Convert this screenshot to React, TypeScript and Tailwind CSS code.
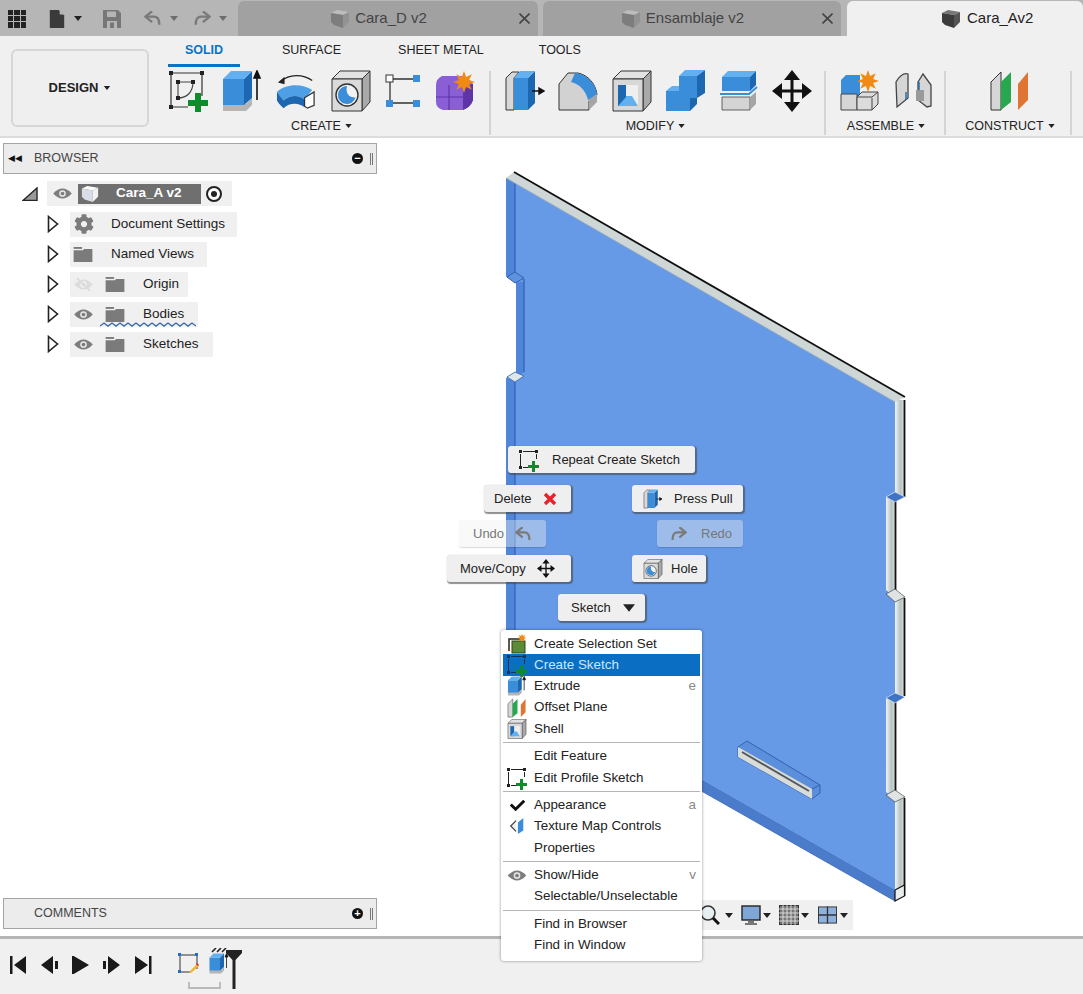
import { FaCheck, FaCog } from "react-icons/fa";

type IconProps = { className?: string };

const BLUE = "#3a8dd9";
const DARK_BLUE = "#1c67b0";
const LIGHT_BLUE = "#62b0f0";

function Caret({ className = "" }: IconProps) {
  return (
    <svg viewBox="0 0 8 5" className={className}>
      <path d="M0 0H8L4 5Z" fill="currentColor" />
    </svg>
  );
}

function SketchIcon({ className = "" }: IconProps) {
  return (
    <svg viewBox="0 0 40 42" className={className}>
      <path d="M3 3H34V26M3 3V37H20" fill="none" stroke="#333" strokeWidth="1.2" />
      <path d="M10 12H25C25 22 19 28 10 28Z" fill="none" stroke="#444" strokeWidth="1.1" />
      {[[1, 1], [32, 1], [1, 35], [8, 10], [23, 10], [8, 26]].map(([x, y]) => (
        <rect key={`${x}-${y}`} x={x} y={y} width="4" height="4" fill="#222" />
      ))}
      <path d="M27 23h6v7h7v6h-7v6h-6v-6h-7v-6h7z" fill="#0f8a2c" />
    </svg>
  );
}

// the marking menu and context menu show the same tool without the inner profile
function SketchIconSmall({ className = "", color = "#222" }: IconProps & { color?: string }) {
  return (
    <svg viewBox="0 0 20 20" className={className}>
      <path d="M4 1.5H16M1.5 4V16M17.5 4V9M4 17.5H9" fill="none" stroke={color} strokeWidth="1" />
      {[[0, 0], [16, 0], [0, 16]].map(([x, y]) => (
        <rect key={`${x}-${y}`} x={x} y={y} width="3" height="3" fill={color} />
      ))}
      <path d="M13 11h3v4h4v3h-4v4h-3v-4H9v-3h4z" fill="#0f8a2c" />
    </svg>
  );
}

function ExtrudeIcon({ className = "" }: IconProps) {
  return (
    <svg viewBox="0 0 40 42" className={className}>
      <path d="M1 34H24L30 28V35L24 41H1Z" fill="#b5b5b5" />
      <path d="M1 9H22V35H1Z" fill={BLUE} />
      <path d="M22 9L30 1V28L22 35Z" fill={DARK_BLUE} />
      <path d="M1 9L9 1H30L22 9Z" fill={LIGHT_BLUE} />
      <path d="M35 30V5M32 8L35 1L38 8Z" stroke="#111" strokeWidth="1.6" fill="#111" />
    </svg>
  );
}

function RevolveIcon({ className = "" }: IconProps) {
  return (
    <svg viewBox="0 0 42 42" className={className}>
      <path d="M5 11C14 3 28 3 38 10" fill="none" stroke="#222" strokeWidth="1.5" />
      <path d="M2 12L9 6L9 14Z" fill="#222" />
      <path d="M1 22C10 13 28 13 38 20L30 30C24 25 15 25 8 31Z" fill="#4f9fe6" />
      <path d="M1 22V31C3 35 6 37 8 39C14 33 24 33 30 38V30C24 25 15 25 8 31Z" fill={DARK_BLUE} />
      <path d="M30 28L40 22V36L33 39L30 37Z" fill="#fff" stroke="#333" strokeWidth="1.3" />
    </svg>
  );
}

function HoleIcon({ className = "" }: IconProps) {
  return (
    <svg viewBox="0 0 40 42" className={className}>
      <path d="M1 9L9 1H39L31 9Z" fill="#e2e2e2" stroke="#333" />
      <path d="M31 9L39 1V32L31 41Z" fill="#a9a9a9" stroke="#333" />
      <path d="M1 9H31V41H1Z" fill="#dadada" stroke="#333" />
      <circle cx="16" cy="25" r="11" fill="#f2f2f2" stroke="#333" strokeWidth="1.4" />
      <path d="M16 16a9 9 0 1 0 8.6 11.5C19 28 14 24 16 16Z" fill={BLUE} />
    </svg>
  );
}

function PatternIcon({ className = "" }: IconProps) {
  return (
    <svg viewBox="0 0 36 38" className={className}>
      <path d="M8 7H28M5 10V28M8 31H28" stroke="#333" strokeWidth="1.3" />
      <rect x="1" y="3" width="7" height="7" fill="#fff" stroke="#333" />
      <rect x="28" y="3" width="7" height="7" fill={BLUE} />
      <rect x="1" y="28" width="7" height="7" fill={BLUE} />
      <rect x="28" y="28" width="7" height="7" fill={BLUE} />
    </svg>
  );
}

function Star({ cx, cy, r }: { cx: number; cy: number; r: number }) {
  const points = Array.from({ length: 16 }, (_, i) => {
    const a = (i * Math.PI) / 8;
    const d = i % 2 === 0 ? r : r * 0.5;
    return `${cx + d * Math.sin(a)},${cy - d * Math.cos(a)}`;
  }).join(" ");
  return <polygon points={points} fill="#f08a14" />;
}

function FormIcon({ className = "" }: IconProps) {
  return (
    <svg viewBox="0 0 40 42" className={className}>
      <path d="M1 15Q1 9 7 6H26Q34 8 38 14V30Q36 37 28 40H8Q1 38 1 32Z" fill="#8a5fd6" />
      <path d="M28 17L38 14V30Q36 37 28 40Z" fill="#5d35a8" />
      <path d="M1 27H28M14 15V40" stroke="#5d35a8" strokeWidth="1.2" />
      <Star cx={29} cy={12} r={11} />
    </svg>
  );
}

function PressPullIcon({ className = "" }: IconProps) {
  return (
    <svg viewBox="0 0 40 42" className={className}>
      <path d="M1 8L7 2H14L9 8V40H1Z" fill="#d8d8d8" stroke="#333" />
      <path d="M9 8H23V40H9Z" fill={BLUE} />
      <path d="M23 8L30 1V33L23 40Z" fill={DARK_BLUE} />
      <path d="M9 8L15 1H30L23 8Z" fill={LIGHT_BLUE} />
      <path d="M27 21H36M34 18L39 21L34 24Z" stroke="#111" strokeWidth="1.4" fill="#111" />
    </svg>
  );
}

function FilletIcon({ className = "" }: IconProps) {
  return (
    <svg viewBox="0 0 40 42" className={className}>
      <path d="M1 14L10 3H20C30 5 38 14 39 25L31 31V40H1Z" fill="#d2d2d2" stroke="#333" />
      <path d="M31 29L39 24V32L31 40Z" fill="#a5a5a5" />
      <path d="M17 3C29 4 38 14 39 24L30 30C28 21 22 14 13 12Z" fill={BLUE} />
    </svg>
  );
}

function ShellIcon({ className = "" }: IconProps) {
  return (
    <svg viewBox="0 0 40 42" className={className}>
      <path d="M1 9L9 1H39L31 9Z" fill="#e2e2e2" stroke="#333" />
      <path d="M31 9L39 1V32L31 41Z" fill="#a9a9a9" stroke="#333" />
      <path d="M1 9H31V41H1Z" fill="#d8d8d8" stroke="#333" />
      <path d="M6 15H26V36H6Z" fill="#efefef" />
      <path d="M6 15H14V36H6Z" fill={DARK_BLUE} />
      <path d="M14 27L20 27V36H6Z M14 26H20L26 36H14Z" fill={LIGHT_BLUE} />
    </svg>
  );
}

function CombineIcon({ className = "" }: IconProps) {
  return (
    <svg viewBox="0 0 40 42" className={className}>
      <path d="M1 21H14V6H32V28H25V41H1Z" fill={BLUE} />
      <path d="M14 6L20 0H40L32 6Z" fill={LIGHT_BLUE} />
      <path d="M1 21L7 16H14V21Z" fill={LIGHT_BLUE} />
      <path d="M32 6L40 0V23L32 28Z" fill={DARK_BLUE} />
      <path d="M25 28H32V34L25 41Z" fill={DARK_BLUE} />
    </svg>
  );
}

function SplitIcon({ className = "" }: IconProps) {
  return (
    <svg viewBox="0 0 40 42" className={className}>
      <path d="M3 7L9 1H37L31 7Z" fill={LIGHT_BLUE} />
      <path d="M3 7H31V21H3Z" fill={BLUE} />
      <path d="M31 7L37 1V15L31 21Z" fill={DARK_BLUE} />
      <path d="M1 24H30L38 17" fill="none" stroke={BLUE} strokeWidth="2" />
      <path d="M3 27H31V40H3Z" fill="#d4d4d4" stroke="#444" strokeWidth="0.8" />
      <path d="M31 27L37 22V34L31 40Z" fill="#a5a5a5" />
    </svg>
  );
}

function MoveIcon({ className = "" }: IconProps) {
  return (
    <svg viewBox="0 0 40 42" className={className}>
      <path d="M20 5V37M4 21H36" stroke="#111" strokeWidth="3" />
      <path d="M20 0L28 10H12ZM20 42L12 32H28ZM0 21L10 13V29ZM40 21L30 29V13Z" fill="#111" />
    </svg>
  );
}

function NewComponentIcon({ className = "" }: IconProps) {
  return (
    <svg viewBox="0 0 40 42" className={className}>
      <path d="M1 10L6 5H20V28H1Z" fill={BLUE} />
      <path d="M1 24H17V40H1Z" fill="#d6d6d6" stroke="#444" />
      <path d="M17 27L22 22H38V34L32 40H17Z" fill="#dcdcdc" stroke="#444" />
      <path d="M32 28V40M17 27H32L38 22" fill="none" stroke="#444" />
      <Star cx={28} cy={11} r={11} />
    </svg>
  );
}

function JointIcon({ className = "" }: IconProps) {
  return (
    <svg viewBox="0 0 38 42" className={className}>
      <path d="M2 12Q8 2 14 4V28L3 37Z" fill="#d6d6d6" stroke="#444" strokeWidth="1.3" />
      <path d="M24 12L29 4L37 15V36L33 37L24 30Z" fill="#d6d6d6" stroke="#444" strokeWidth="1.3" />
      <path d="M22 20H30V31H22Z" fill="#9a9a9a" />
      <path d="M12 22V30M25 12V20" stroke={DARK_BLUE} strokeWidth="1.4" />
    </svg>
  );
}

function PlaneIcon({ className = "" }: IconProps) {
  return (
    <svg viewBox="0 0 40 42" className={className}>
      <path d="M1 12L11 2V40H1Z" fill="#d6d6d6" stroke="#333" />
      <path d="M11 12L21 2V32L11 40Z" fill="#27a84f" />
      <path d="M28 14L38 2V30L28 40Z" fill="#e07533" />
    </svg>
  );
}

function CubeIcon({ className = "", face = "#9c9c9c", side = "#8a8a8a", top = "#b5b5b5" }: IconProps & { face?: string; side?: string; top?: string }) {
  return (
    <svg viewBox="0 0 20 20" className={className}>
      <path d="M1 4L7 1L19 3L13 6Z" fill={top} />
      <path d="M1 4L13 6V19L4 16L1 13Z" fill={face} />
      <path d="M13 6L19 3V13L13 19Z" fill={side} />
    </svg>
  );
}

function EyeIcon({ className = "", off = false }: IconProps & { off?: boolean }) {
  return (
    <svg viewBox="0 0 20 14" className={className}>
      <path d="M0 7Q10 -4 20 7Q10 18 0 7Z" fill={off ? "#dcdcdc" : "#7d7d7d"} />
      <circle cx="10" cy="7" r="3.6" fill={off ? "#f0f0f0" : "#e8e8e8"} />
      <circle cx="10" cy="7" r="2" fill={off ? "#dcdcdc" : "#7d7d7d"} />
      {off && <path d="M3 0L17 14" stroke="#dcdcdc" strokeWidth="2" />}
    </svg>
  );
}

function FolderIcon({ className = "" }: IconProps) {
  return (
    <svg viewBox="0 0 20 16" className={className}>
      <path d="M0 0H9V2H0Z" fill="#7b7b7b" />
      <path d="M0 3.5H10L11 2H20V16H0Z" fill="#7b7b7b" />
    </svg>
  );
}

function ExpandArrow() {
  return (
    <svg viewBox="0 0 12 18" className="h-[18px] w-3 shrink-0">
      <path d="M1.5 1.5L10.5 9L1.5 16.5Z" fill="#fff" stroke="#222" strokeWidth="1.6" />
    </svg>
  );
}

function FileIcon({ className = "" }: IconProps) {
  return (
    <svg viewBox="0 0 16 20" className={className}>
      <path d="M0 0H10L16 6V20H0Z" fill="#3a3a3a" />
      <path d="M11 0L16 5H11Z" fill="#b5b5b5" />
    </svg>
  );
}

function SaveIcon({ className = "" }: IconProps) {
  return (
    <svg viewBox="0 0 18 18" className={className}>
      <path d="M0 0H15L18 3V18H0Z" fill="#777" />
      <path d="M4 1.5H13V7H4Z" fill="#b5b5b5" />
      <path d="M4 11H14V18H4Z" fill="#b5b5b5" />
      <path d="M7 12.5H11V18H7Z" fill="#777" />
    </svg>
  );
}

function UndoIcon({ className = "", color = "#7a7a7a" }: IconProps & { color?: string }) {
  return (
    <svg viewBox="0 0 20 16" className={className}>
      <path d="M3 6H11Q17 6 17 15" fill="none" stroke={color} strokeWidth="2.6" />
      <path d="M9 0L1.5 6L9 12" fill="none" stroke={color} strokeWidth="2.6" />
    </svg>
  );
}

function TabCube({ dark = false }: { dark?: boolean }) {
  return dark ? (
    <CubeIcon className="h-5 w-5" face="#3c3c3c" side="#555" top="#777" />
  ) : (
    <CubeIcon className="h-5 w-5" face="#7d7d7d" side="#929292" top="#bdbdbd" />
  );
}

function DocTab({ name, className }: { name: string; className: string }) {
  return (
    <div className={`flex items-center rounded-t-md bg-[#a1a1a1] text-[#444] ${className}`}>
      <div className="flex flex-1 items-center justify-center gap-[5px]">
        <TabCube />
        <span className="text-[15px]">{name}</span>
      </div>
      <svg viewBox="0 0 11 11" className="mr-[8px] h-[11px] w-[11px]">
        <path d="M0.5 0.5L10.5 10.5M10.5 0.5L0.5 10.5" stroke="#444" strokeWidth="1.6" />
      </svg>
    </div>
  );
}

function TopBar() {
  return (
    <div className="flex h-9 shrink-0 items-stretch bg-[#b6b6b6] pt-[1px]">
      <div className="flex w-[238px] shrink-0 items-center text-[#6d6d6d]">
        <div className="ml-[8px] grid h-[18px] w-[18px] grid-cols-3 gap-[1px]">
          {Array.from({ length: 9 }, (_, i) => (
            <span key={i} className="bg-[#222]" />
          ))}
        </div>
        <FileIcon className="ml-[23px] h-[18px] w-[16px]" />
        <Caret className="ml-[9px] h-[5px] w-[8px] text-[#222]" />
        <SaveIcon className="ml-[21px] h-[18px] w-[18px]" />
        <UndoIcon className="ml-[23px] h-[15px] w-[18px]" />
        <Caret className="ml-[8px] h-[5px] w-[8px]" />
        <UndoIcon className="ml-[15px] h-[15px] w-[18px] -scale-x-100" />
        <Caret className="ml-[8px] h-[5px] w-[8px]" />
      </div>
      <DocTab name="Cara_D v2" className="w-[300px]" />
      <DocTab name="Ensamblaje v2" className="ml-[5px] w-[298px]" />
      <div className="ml-[6px] flex flex-1 items-center gap-[6px] rounded-t-md bg-[#f0f0f0] pl-[94px] text-[#222]">
        <TabCube dark />
        <span className="text-[15px]">Cara_Av2</span>
      </div>
    </div>
  );
}

function ToolGroup({ label, width, labelClass = "", icons }: { label: string; width: string; labelClass?: string; icons: React.ReactNode }) {
  return (
    <div className={`flex flex-col items-center ${width}`}>
      <div className="flex h-[43px] w-full items-center justify-between">{icons}</div>
      <div className={`mt-[6px] flex items-center gap-[4px] text-[12.5px] leading-4 text-[#222] ${labelClass}`}>
        {label}
        <Caret className="h-[4px] w-[7px]" />
      </div>
    </div>
  );
}

function Divider({ className }: { className: string }) {
  return <div className={`mt-[2px] h-[64px] w-[2px] shrink-0 bg-[#d4d4d4] ${className}`} />;
}

function Toolbar() {
  return (
    <div className="flex h-[102px] shrink-0 border-b-2 border-[#dcdcdc] bg-[#f0f0f0] pl-[11px] pt-[13px]">
      <div className="flex h-[78px] w-[138px] shrink-0 items-center justify-center gap-[5px] rounded-md border-2 border-[#d6d6d6] bg-[#efefef] text-[13px] font-bold text-[#222]">
        DESIGN
        <Caret className="h-[4px] w-[8px]" />
      </div>
      <div className="-mt-[8px] ml-[19px] flex flex-col">
        <div className="flex h-[28px] items-start text-[12.5px] leading-4 text-[#222]">
          <span className="h-[26px] w-[72px] border-b-[3px] border-[#0a74c4] pt-[1px] text-center font-bold text-[#0a74c4]">SOLID</span>
          <span className="ml-[42px] pt-[1px]">SURFACE</span>
          <span className="ml-[57px] pt-[1px]">SHEET METAL</span>
          <span className="ml-[55px] pt-[1px]">TOOLS</span>
        </div>
        <div className="flex">
          <ToolGroup
            label="CREATE"
            width="w-[307px]"
            icons={
              <>
                <SketchIcon className="h-[42px] w-10" />
                <ExtrudeIcon className="h-[42px] w-10" />
                <RevolveIcon className="h-[42px] w-10" />
                <HoleIcon className="h-[42px] w-10" />
                <PatternIcon className="h-[38px] w-9" />
                <FormIcon className="h-[42px] w-10" />
              </>
            }
          />
          <Divider className="mx-[14px]" />
          <ToolGroup
            label="MODIFY"
            width="w-[307px]"
            labelClass="mr-[6px]"
            icons={
              <>
                <PressPullIcon className="h-[42px] w-10" />
                <FilletIcon className="h-[42px] w-10" />
                <ShellIcon className="h-[42px] w-10" />
                <CombineIcon className="h-[42px] w-10" />
                <SplitIcon className="h-[42px] w-10" />
                <MoveIcon className="h-[42px] w-10" />
              </>
            }
          />
          <Divider className="ml-[12px] mr-[14px]" />
          <ToolGroup
            label="ASSEMBLE"
            width="w-[92px]"
            icons={
              <>
                <NewComponentIcon className="h-[42px] w-10" />
                <JointIcon className="h-[42px] w-[38px]" />
              </>
            }
          />
          <Divider className="ml-[12px] mr-[14px]" />
          <ToolGroup
            label="CONSTRUCT"
            width="w-[100px]"
            icons={<PlaneIcon className="mx-auto h-[42px] w-10" />}
          />
          <Divider className="ml-[10px]" />
        </div>
      </div>
    </div>
  );
}

function PanelHeader({ title, sign, titleClass }: { title: string; sign: string; titleClass?: string }) {
  return (
    <div className="flex h-[31px] w-[374px] items-center border border-[#a5a5a5] bg-[#ececec] text-[12.5px] text-[#444]">
      <span className={titleClass}>{title}</span>
      <span className="ml-auto flex h-[11px] w-[11px] items-center justify-center rounded-full bg-[#111] text-[11px] font-bold leading-none text-white">{sign}</span>
      <span className="ml-[7px] mr-[3px] h-[12px] w-[3px] border-x border-[#777]" />
    </div>
  );
}

function TreeRow({ width, children }: { width: string; children: React.ReactNode }) {
  return (
    <div className="flex h-[30px] items-center pl-[44px]">
      <ExpandArrow />
      <div className={`ml-[11px] flex h-[25px] items-center bg-[#f0f0f0] text-[13.5px] text-[#222] ${width}`}>{children}</div>
    </div>
  );
}

function Browser() {
  return (
    <div className="flex flex-col">
      <PanelHeader
        title="BROWSER"
        sign="−"
        titleClass="relative pl-[30px] before:absolute before:left-[4px] before:top-[3px] before:text-[9px] before:text-[#111] before:content-['◀◀']"
      />
      <div className="mt-[7px] flex h-[25px] items-center pl-[19px]">
        <svg viewBox="0 0 16 14" className="h-[14px] w-4 shrink-0">
          <path d="M1 13.5L15 1V13.5Z" fill="#fff" stroke="#222" strokeWidth="1.4" />
          <path d="M1 13.5L15 1V13.5Z" fill="#333" opacity="0.5" />
        </svg>
        <div className="ml-[9px] flex h-[25px] w-[185px] items-center bg-[#f0f0f0]">
          <EyeIcon className="ml-[6px] h-[13px] w-[19px]" />
          <div className="ml-[6px] flex h-[20px] w-[123px] items-center bg-[#6f6f6f] pl-[3px] text-[13.5px] font-bold text-white">
            <CubeIcon className="h-[18px] w-[18px]" face="#d8dde8" side="#f2f2f2" top="#fafafa" />
            <span className="ml-[17px]">Cara_A v2</span>
          </div>
          <span className="ml-[5px] flex h-[16px] w-[16px] items-center justify-center rounded-full border-2 border-[#222] bg-white">
            <span className="h-[6px] w-[6px] rounded-full bg-[#222]" />
          </span>
        </div>
      </div>
      <div className="mt-[3px] flex flex-col">
        <TreeRow width="w-[167px]">
          <FaCog className="ml-[4px] h-[20px] w-[20px] text-[#7b7b7b]" />
          <span className="ml-[17px]">Document Settings</span>
        </TreeRow>
        <TreeRow width="w-[137px]">
          <FolderIcon className="ml-[3px] h-[15px] w-[20px]" />
          <span className="ml-[18px]">Named Views</span>
        </TreeRow>
        <TreeRow width="w-[118px]">
          <EyeIcon className="ml-[4px] h-[13px] w-[19px]" off />
          <FolderIcon className="ml-[12px] h-[15px] w-[20px]" />
          <span className="ml-[18px]">Origin</span>
        </TreeRow>
        <TreeRow width="relative w-[128px]">
          <EyeIcon className="ml-[4px] h-[13px] w-[19px]" />
          <FolderIcon className="ml-[12px] h-[15px] w-[20px]" />
          <span className="ml-[18px]">Bodies</span>
          <svg viewBox="0 0 96 5" className="absolute bottom-0 left-[30px] h-[5px] w-[96px]">
            <path d="M0 4L4 1L8 4L12 1L16 4L20 1L24 4L28 1L32 4L36 1L40 4L44 1L48 4L52 1L56 4L60 1L64 4L68 1L72 4L76 1L80 4L84 1L88 4L92 1L96 4" fill="none" stroke="#3c6ca8" strokeWidth="1.4" />
          </svg>
        </TreeRow>
        <TreeRow width="w-[143px]">
          <EyeIcon className="ml-[4px] h-[13px] w-[19px]" />
          <FolderIcon className="ml-[12px] h-[15px] w-[20px]" />
          <span className="ml-[18px]">Sketches</span>
        </TreeRow>
      </div>
    </div>
  );
}

function Model() {
  return (
    <svg viewBox="0 138 1083 798" className="absolute inset-0 h-full w-full">
      <defs>
        <linearGradient id="edge" x1="0" x2="1" y1="0" y2="0">
          <stop offset="0" stopColor="#f2f4f4" />
          <stop offset="0.6" stopColor="#b9c2c2" />
          <stop offset="1" stopColor="#d8dcdc" />
        </linearGradient>
      </defs>
      {/* bottom thickness */}
      <path d="M506 668L895 890V901L506 680Z" fill="#4a7ccb" stroke="#3a68b3" strokeWidth="0.8" />
      {/* right edge strips */}
      {[[895, 400, 97], [886, 498, 97], [895, 598, 98], [886, 698, 98], [895, 798, 98]].map(([x, y, h]) => (
        <g key={y}>
          <rect x={x} y={y} width="9" height={h} fill="url(#edge)" />
          <path d={`M${x + 9.5} ${y}V${y + h}`} stroke="#111" strokeWidth="1.8" />
        </g>
      ))}
      <path d="M895 890L904.5 885V896L895 901Z" fill="#e8ecec" stroke="#111" strokeWidth="1.2" />
      {/* front face */}
      <path
        d="M506 178L895 402V492L886 497V590L895 597V694L886 699V792L895 799V890L506 668V378L516 372V282L506 276Z"
        fill="#6699e6"
      />
      {/* left strips */}
      <path d="M506 178L515 183V273L506 277Z" fill="#4f86da" />
      <path d="M516 282H524V372L516 378Z" fill="#4f86da" />
      <path d="M506 378L515 382V668L506 668Z" fill="#4f86da" />
      <path d="M515 183V272M524 279V372M515 382V680" stroke="#2f62b0" strokeWidth="1.2" fill="none" />
      <path d="M507 277L515 272L524 278L515 283Z" fill="#5f93e0" stroke="#2f62b0" />
      <path d="M507 377L515 372L524 376L515 382Z" fill="#dfe6e6" stroke="#2f62b0" strokeWidth="0.8" />
      {/* top thickness */}
      <path d="M506 178L514 172L905 397L895 402Z" fill="#cfd6d6" />
      <path d="M514 172L905 397" stroke="#111" strokeWidth="1.8" />
      <path d="M506 178L895 402" stroke="#8aa0b8" strokeWidth="0.8" />
      {/* right notch ledges */}
      <path d="M886 497L895 492L905 497L895 502Z" fill="#3f73c4" stroke="#eee" strokeWidth="0.6" />
      <path d="M886 594L895 589L905 597L895 602Z" fill="#dfe3e3" stroke="#333" strokeWidth="0.6" />
      <path d="M886 698L895 693L905 697L895 703Z" fill="#3f73c4" stroke="#eee" strokeWidth="0.6" />
      <path d="M886 795L895 790L905 797L895 802Z" fill="#dfe3e3" stroke="#333" strokeWidth="0.6" />
      {/* slot */}
      <path d="M738 747L747 741L820 785V793L812 799L738 757Z" fill="#5b8fdc" stroke="#2f62b0" strokeWidth="1" />
      <path d="M738 747L812 789V799L738 757Z" fill="#d9dcd8" />
      <path d="M742 752L809 791" stroke="#55585a" strokeWidth="2" />
      <path d="M812 789L820 785" stroke="#2f62b0" strokeWidth="1" />
    </svg>
  );
}

function NavBar() {
  return (
    <div className="absolute left-[690px] top-[762px] flex h-[30px] w-[163px] items-center bg-[#f0f0f0] pl-[10px] text-[#222]">
      <svg viewBox="0 0 20 20" className="h-[20px] w-[20px]">
        <circle cx="8" cy="8" r="7" fill="#e6f0f0" stroke="#333" strokeWidth="1.6" />
        <path d="M13 13L19 19" stroke="#111" strokeWidth="3" />
      </svg>
      <Caret className="ml-[5px] h-[5px] w-[8px]" />
      <svg viewBox="0 0 20 20" className="ml-[8px] h-[20px] w-[20px]">
        <rect x="1" y="1" width="18" height="14" fill="#7ea7d8" stroke="#222" strokeWidth="1.4" />
        <path d="M7 16H13V18H16V20H4V18H7Z" fill="#777" />
      </svg>
      <Caret className="ml-[2px] h-[5px] w-[8px]" />
      <svg viewBox="0 0 20 20" className="ml-[8px] h-[20px] w-[20px]">
        <rect x="0.5" y="0.5" width="19" height="19" fill="#777" stroke="#333" />
        <path d="M4 0V20M8 0V20M12 0V20M16 0V20M0 4H20M0 8H20M0 12H20M0 16H20" stroke="#eee" strokeWidth="0.8" />
      </svg>
      <Caret className="ml-[2px] h-[5px] w-[8px]" />
      <svg viewBox="0 0 20 18" className="ml-[9px] h-[18px] w-[19px]">
        <rect x="0.5" y="0.5" width="19" height="17" fill="#8fb2dc" stroke="#333" />
        <path d="M10 0V18M0 9H20" stroke="#333" strokeWidth="1.4" />
      </svg>
      <Caret className="ml-[3px] h-[5px] w-[8px]" />
    </div>
  );
}

function MarkButton({ className, children, disabled = false }: { className: string; children: React.ReactNode; disabled?: boolean }) {
  return (
    <div
      className={`absolute flex h-[27px] items-center rounded-[3px] text-[13px] ${
        disabled
          ? "bg-[#f0f0f0]/40 text-[#777] shadow-[0_1px_1px_rgba(0,0,0,0.15)]"
          : "bg-[#efefef] text-[#222] shadow-[1px_1px_1px_1px_rgba(70,70,70,0.6)]"
      } ${className}`}
    >
      {children}
    </div>
  );
}

function MarkingMenu() {
  return (
    <>
      <MarkButton className="left-[508px] top-[308px] w-[187px] pl-[11px]">
        <SketchIconSmall className="h-[20px] w-[20px] overflow-visible" />
        <span className="ml-[13px]">Repeat Create Sketch</span>
      </MarkButton>
      <MarkButton className="left-[484px] top-[347px] w-[87px] pl-[10px]">
        Delete
        <svg viewBox="0 0 14 14" className="ml-[11px] h-[14px] w-[14px]">
          <path d="M2 2L12 12M12 2L2 12" stroke="#e8212b" strokeWidth="3.4" />
        </svg>
      </MarkButton>
      <MarkButton className="left-[632px] top-[347px] w-[111px] pl-[11px]">
        <PressPullIcon className="h-[20px] w-[20px]" />
        <span className="ml-[11px]">Press Pull</span>
      </MarkButton>
      <MarkButton disabled className="left-[459px] top-[382px] w-[87px] pl-[14px]">
        Undo
        <UndoIcon className="ml-[11px] h-[14px] w-[17px]" />
      </MarkButton>
      <MarkButton disabled className="left-[657px] top-[382px] w-[86px] pl-[13px]">
        <UndoIcon className="h-[14px] w-[17px] -scale-x-100" />
        <span className="ml-[14px]">Redo</span>
      </MarkButton>
      <MarkButton className="left-[447px] top-[417px] w-[124px] pl-[13px]">
        Move/Copy
        <MoveIcon className="ml-[11px] h-[19px] w-[18px]" />
      </MarkButton>
      <MarkButton className="left-[632px] top-[417px] w-[74px] pl-[11px]">
        <HoleIcon className="h-[20px] w-[20px]" />
        <span className="ml-[8px]">Hole</span>
      </MarkButton>
      <MarkButton className="left-[558px] top-[456px] w-[87px] pl-[13px]">
        Sketch
        <Caret className="ml-[12px] h-[8px] w-[12px]" />
      </MarkButton>
    </>
  );
}

function MenuItem({ label, hint, icon, active = false }: { label: string; hint?: string; icon?: React.ReactNode; active?: boolean }) {
  return (
    <div className={`flex h-[21.3px] items-center text-[13.4px] ${active ? "bg-[#0a6fc2] text-[#cfe6f8]" : "text-[#222]"}`}>
      <span className="mr-[3px] flex w-[28px] shrink-0 items-center justify-center">{icon}</span>
      <span>{label}</span>
      {hint && <span className="ml-auto pr-[4px] text-[#888]">{hint}</span>}
    </div>
  );
}

function MenuSeparator() {
  return <div className="my-[2.6px] h-[1px] bg-[#b5b5b5]" />;
}

function SelectionSetIcon() {
  return (
    <svg viewBox="0 0 20 20" className="h-[20px] w-[20px]">
      <path d="M2 17V5H14" fill="none" stroke="#222" strokeWidth="1.5" />
      <rect x="5" y="7" width="13" height="12" fill="#5d8a36" stroke="#2b4a15" />
      <Star cx={15} cy={4} r={4.5} />
    </svg>
  );
}

function TextureIcon() {
  return (
    <svg viewBox="0 0 20 20" className="h-[18px] w-[18px]">
      <path d="M9 4L3 10L9 16" fill="#f2f2f2" stroke="#444" strokeWidth="1.4" />
      <path d="M11 6L17 1V15L11 19Z" fill={BLUE} />
    </svg>
  );
}

function ContextMenu() {
  return (
    <div className="absolute left-[501px] top-[492px] flex h-[331px] w-[201px] flex-col rounded-[3px] bg-white px-[2px] pt-[3px] shadow-[0_0_3px_rgba(0,0,0,0.45)]">
      <MenuItem label="Create Selection Set" icon={<SelectionSetIcon />} />
      <MenuItem label="Create Sketch" active icon={<SketchIconSmall className="h-[20px] w-[20px] overflow-visible" color="#12345a" />} />
      <MenuItem label="Extrude" hint="e" icon={<ExtrudeIcon className="h-[20px] w-[20px]" />} />
      <MenuItem label="Offset Plane" icon={<PlaneIcon className="h-[20px] w-[20px]" />} />
      <MenuItem label="Shell" icon={<ShellIcon className="h-[20px] w-[20px]" />} />
      <MenuSeparator />
      <MenuItem label="Edit Feature" />
      <MenuItem label="Edit Profile Sketch" icon={<SketchIconSmall className="h-[20px] w-[20px] overflow-visible" />} />
      <MenuSeparator />
      <MenuItem label="Appearance" hint="a" icon={<FaCheck className="h-[15px] w-[15px] text-[#111]" />} />
      <MenuItem label="Texture Map Controls" icon={<TextureIcon />} />
      <MenuItem label="Properties" />
      <MenuSeparator />
      <MenuItem label="Show/Hide" hint="v" icon={<EyeIcon className="h-[13px] w-[20px]" />} />
      <MenuItem label="Selectable/Unselectable" />
      <MenuSeparator />
      <MenuItem label="Find in Browser" />
      <MenuItem label="Find in Window" />
    </div>
  );
}

function Timeline() {
  return (
    <div className="relative flex h-[58px] shrink-0 items-center border-t-[3px] border-[#b5b5b5] bg-[#f0f0f0] pl-[10px] text-[#1a1a1a]">
      <svg viewBox="0 0 145 18" className="mb-[3px] h-[18px] w-[145px]">
        <path d="M0 0H2.5V18H0ZM16 0V18L4 9Z" fill="currentColor" />
        <path d="M43 0V18L31 9ZM45 5H48V13H45Z" fill="currentColor" />
        <path d="M62 -1L79 9L62 19Z" fill="currentColor" />
        <path d="M93 5H96V13H93ZM98 0L110 9L98 18Z" fill="currentColor" />
        <path d="M125 0L138 9L125 18ZM139 0H141.5V18H139Z" fill="currentColor" />
      </svg>
      <div className="relative ml-[23px] mb-[6px] flex items-center gap-[10px]">
        <svg viewBox="0 0 21 21" className="h-[21px] w-[21px]">
          <path d="M2 2H19V16M2 2V19H12" fill="none" stroke="#333" strokeWidth="1" />
          {[[0, 0], [17, 0], [0, 17]].map(([x, y]) => (
            <rect key={`${x}-${y}`} x={x} y={y} width="3" height="3" fill="#1e6fc8" />
          ))}
          <path d="M11 19L19 11L21 13L13 20Z" fill="#f0b429" />
          <path d="M19 10L21 12L20 13L18 11Z" fill="#e02020" />
        </svg>
        <ExtrudeIcon className="h-[21px] w-[20px]" />
      </div>
      {/* marker and rollback bracket sit over the feature strip */}
      <svg viewBox="0 0 60 44" className="absolute left-[186px] top-[9px] h-[44px] w-[60px]">
        <path d="M26 4L30 0M31 4L35 0M36 4L40 0" stroke="#222" strokeWidth="1.6" />
        <path d="M40 2H56V5L49.5 12V41H46.5V12L40 5Z" fill="#222" />
        <path d="M3 34V40H34V34" fill="none" stroke="#b9b9b9" strokeWidth="1.8" />
      </svg>
    </div>
  );
}

export default function App() {
  return (
    <div className="flex h-[994px] w-[1083px] flex-col overflow-hidden bg-white font-['Liberation_Sans',Arial,sans-serif]">
      <TopBar />
      <Toolbar />
      <div className="relative z-10 flex flex-1 flex-col justify-between pb-[7px] pl-[3px] pt-[5px]">
        <Model />
        <div className="relative">
          <Browser />
        </div>
        <div className="relative">
          <PanelHeader title="COMMENTS" sign="+" titleClass="pl-[30px]" />
        </div>
        <NavBar />
        <MarkingMenu />
        <ContextMenu />
      </div>
      <Timeline />
    </div>
  );
}
